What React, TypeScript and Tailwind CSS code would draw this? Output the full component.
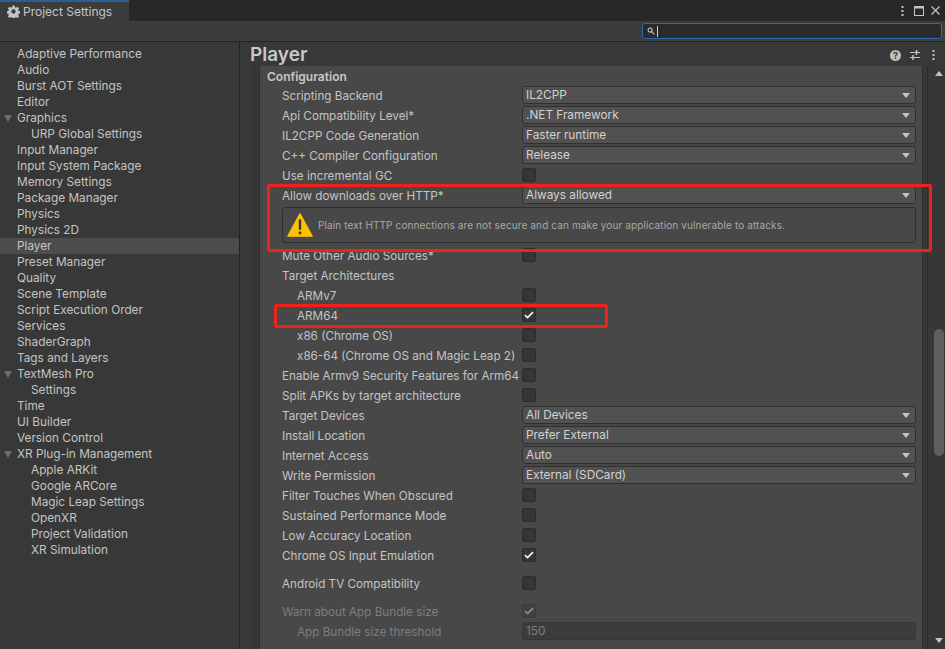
import React from 'react';

const menuItems: { label: string; indent?: boolean; arrow?: boolean; selected?: boolean }[] = [
  { label: 'Adaptive Performance' },
  { label: 'Audio' },
  { label: 'Burst AOT Settings' },
  { label: 'Editor' },
  { label: 'Graphics', arrow: true },
  { label: 'URP Global Settings', indent: true },
  { label: 'Input Manager' },
  { label: 'Input System Package' },
  { label: 'Memory Settings' },
  { label: 'Package Manager' },
  { label: 'Physics' },
  { label: 'Physics 2D' },
  { label: 'Player', selected: true },
  { label: 'Preset Manager' },
  { label: 'Quality' },
  { label: 'Scene Template' },
  { label: 'Script Execution Order' },
  { label: 'Services' },
  { label: 'ShaderGraph' },
  { label: 'Tags and Layers' },
  { label: 'TextMesh Pro', arrow: true },
  { label: 'Settings', indent: true },
  { label: 'Time' },
  { label: 'UI Builder' },
  { label: 'Version Control' },
  { label: 'XR Plug-in Management', arrow: true },
  { label: 'Apple ARKit', indent: true },
  { label: 'Google ARCore', indent: true },
  { label: 'Magic Leap Settings', indent: true },
  { label: 'OpenXR', indent: true },
  { label: 'Project Validation', indent: true },
  { label: 'XR Simulation', indent: true },
];

const Check = ({ dim }: { dim?: boolean }) => (
  <svg width="10" height="8" viewBox="0 0 10 8" fill="none">
    <path
      d="M1 4.2 L3.6 6.6 L9 1.2"
      stroke={dim ? '#8a8a8a' : '#eeeeee'}
      strokeWidth="1.8"
    />
  </svg>
);

const Checkbox = ({ checked, dim }: { checked?: boolean; dim?: boolean }) => (
  <div
    className={
      dim
        ? 'flex h-[14px] w-[14px] items-center justify-center rounded-[2px] border border-[#3a3a3a] bg-[#414141]'
        : 'flex h-[14px] w-[14px] items-center justify-center rounded-[2px] border border-[#2b2b2b] bg-[#353535]'
    }
  >
    {checked && <Check dim={dim} />}
  </div>
);

const Dropdown = ({ value }: { value: string }) => (
  <div className="flex h-[18px] flex-1 items-center justify-between rounded-[3px] border border-[#303030] bg-[#515151] pl-[3px] pr-[5px] text-[#d2d2d2]">
    <span>{value}</span>
    <div className="h-0 w-0 border-x-[4px] border-t-[5px] border-x-transparent border-t-[#c4c4c4]" />
  </div>
);

const Row = ({
  label,
  indent,
  dim,
  children,
}: {
  label: string;
  indent?: boolean;
  dim?: boolean;
  children: React.ReactNode;
}) => (
  <div className="flex h-5 items-center">
    <div
      className={
        (indent ? 'pl-[37px] ' : 'pl-[22px] ') +
        (dim
          ? 'w-[262px] shrink-0 whitespace-nowrap text-[11.7px] text-[#7e7e7e]'
          : 'w-[262px] shrink-0 whitespace-nowrap text-[11.7px] text-[#c4c4c4]')
      }
    >
      {label}
    </div>
    <div className="mb-[2px] flex flex-1 items-center pr-[6px] text-[11.8px]">{children}</div>
  </div>
);

export default function App() {
  return (
    <div
      className="relative flex h-[649px] w-[945px] flex-col overflow-hidden bg-[#383838] text-[12px] leading-4 text-[#c4c4c4]"
      style={{ fontFamily: 'Inter, "Liberation Sans", sans-serif' }}
    >
      {/* tab strip */}
      <div className="flex h-[21px] shrink-0 items-stretch justify-between bg-[#282828]">
        <div className="flex w-[129px] items-center gap-[3px] border-t-2 border-[#2a5f96] bg-[#3c3c3c] pl-[7px]">
          <svg width="13" height="13" viewBox="0 0 24 24" fill="#c4c4c4">
            <path d="M10 1h4l.6 3 2.3 1 2.6-1.7 2.8 2.8-1.7 2.6 1 2.3 3 .6v4l-3 .6-1 2.3 1.7 2.6-2.8 2.8-2.6-1.7-2.3 1-.6 3h-4l-.6-3-2.3-1-2.6 1.7-2.8-2.8 1.7-2.6-1-2.3-3-.6v-4l3-.6 1-2.3L1.700 6.100l2.800-2.800 2.600 1.700 2.300-1zM12 8a4 4 0 1 0 0 8 4 4 0 0 0 0-8z" />
          </svg>
          <span>Project Settings</span>
        </div>
        <div className="flex items-center pr-[5px]">
          <svg width="3" height="10" viewBox="0 0 3 10" fill="#c4c4c4">
            <rect x="0.500" y="0" width="2" height="2" />
            <rect x="0.500" y="4" width="2" height="2" />
            <rect x="0.500" y="8" width="2" height="2" />
          </svg>
          <svg width="10" height="10" viewBox="0 0 10 10" fill="none" stroke="#c4c4c4" className="ml-[10px]">
            <rect x="0.500" y="0.500" width="9" height="9" />
            <path d="M0.500 1.500H9.500" strokeWidth="2" />
          </svg>
          <svg width="9" height="9" viewBox="0 0 9 9" fill="none" stroke="#c4c4c4" strokeWidth="1.200" className="ml-[7px]">
            <path d="M0.500 0.500L8.500 8.500M8.500 0.500L0.500 8.500" />
          </svg>
        </div>
      </div>

      {/* search toolbar */}
      <div className="flex h-[21px] shrink-0 items-center justify-end border-b border-[#232323] bg-[#3c3c3c] pr-[3px]">
        <div className="flex h-4 w-[300px] items-center rounded-[3px] border border-[#2a6bb3] bg-[#2a2a2a] pl-[4px]">
          <svg width="8" height="8" viewBox="0 0 9 9" fill="none" stroke="#c4c4c4" strokeWidth="1.200">
            <circle cx="3.500" cy="3.500" r="2.300" />
            <path d="M5.300 5.300L8.300 8.300" />
          </svg>
          <div className="ml-[2px] h-[11px] w-px bg-[#d0d0d0]" />
        </div>
      </div>

      <div className="flex min-h-0 flex-1">
        {/* settings list */}
        <div className="w-[240px] shrink-0 border-r border-[#232323] bg-[#383838] pt-[4px] text-[11.8px]">
          {menuItems.map((item) => (
            <div
              key={item.label}
              className={
                item.selected
                  ? 'relative h-4 bg-[#4d4d4d] pl-[17px]'
                  : item.indent
                    ? 'relative h-4 pl-[31px]'
                    : 'relative h-4 pl-[17px]'
              }
            >
              {item.arrow && (
                <div className="absolute left-[4px] top-[5px] h-0 w-0 border-x-[4px] border-t-[7px] border-x-transparent border-t-[#6e6e6e]" />
              )}
              {item.label}
            </div>
          ))}
        </div>

        {/* player inspector */}
        <div className="flex min-w-0 flex-1 flex-col">
          <div className="flex h-[24px] shrink-0 items-center justify-between pl-[10px] pr-[10px] pt-[2px]">
            <span className="text-[19px] font-semibold leading-[22px] text-[#c8c8c8]">Player</span>
            <div className="flex items-center">
              <div className="flex h-[11px] w-[11px] items-center justify-center rounded-full bg-[#c0c0c0] text-[9px] font-bold leading-none text-[#383838]">
                ?
              </div>
              <svg width="10" height="10" viewBox="0 0 10 10" stroke="#c4c4c4" fill="none" className="ml-[9px]">
                <path d="M0 2.500H10M0 7.500H10" />
                <path d="M6.500 0V5M3 5V10" strokeWidth="1.500" />
              </svg>
              <svg width="3" height="10" viewBox="0 0 3 10" fill="#c4c4c4" className="ml-[12px]">
                <rect x="0.500" y="0" width="2" height="2" />
                <rect x="0.500" y="4" width="2" height="2" />
                <rect x="0.500" y="8" width="2" height="2" />
              </svg>
            </div>
          </div>

          <div className="flex min-h-0 flex-1">
            <div className="ml-[14px] w-[5px] shrink-0 border-l border-[#2e2e2e]" />
            <div className="min-w-0 w-[663px] shrink-0 overflow-hidden border-l border-[#2e2e2e] bg-[#484848] pt-[3px]">
              <div className="flex h-[16px] items-center pl-[7px] font-semibold text-[#c8c8c8]">Configuration</div>
              <div className="pt-[1px]">
                <Row label="Scripting Backend"><Dropdown value="IL2CPP" /></Row>
                <Row label="Api Compatibility Level*"><Dropdown value=".NET Framework" /></Row>
                <Row label="IL2CPP Code Generation"><Dropdown value="Faster runtime" /></Row>
                <Row label="C++ Compiler Configuration"><Dropdown value="Release" /></Row>
                <Row label="Use incremental GC"><Checkbox /></Row>
                <Row label="Allow downloads over HTTP*"><Dropdown value="Always allowed" /></Row>
                <div className="ml-[22px] mr-[6px] mt-[1px] flex h-[36px] items-center rounded-[3px] border border-[#2e2e2e] bg-[#484848] pl-[4px]">
                  <svg width="26" height="26" viewBox="0 0 28 28">
                    <path d="M14 2 L27 26 H1 Z" fill="#fdc103" stroke="#fdc103" strokeWidth="1.500" strokeLinejoin="round" />
                    <path d="M14 9V18" stroke="#3a3a3a" strokeWidth="2.600" strokeLinecap="round" />
                    <circle cx="14" cy="22.500" r="1.600" fill="#3a3a3a" />
                  </svg>
                  <span className="ml-[5px] text-[10px] tracking-[0.12px] text-[#a8a8a8]">
                    Plain text HTTP connections are not secure and can make your application vulnerable to attacks.
                  </span>
                </div>
                <div className="mt-[3px]">
                  <Row label="Mute Other Audio Sources*"><Checkbox /></Row>
                </div>
                <Row label="Target Architectures"><span /></Row>
                <Row label="ARMv7" indent><Checkbox /></Row>
                <Row label="ARM64" indent><Checkbox checked /></Row>
                <Row label="x86 (Chrome OS)" indent><Checkbox /></Row>
                <Row label="x86-64 (Chrome OS and Magic Leap 2)" indent><Checkbox /></Row>
                <Row label="Enable Armv9 Security Features for Arm64"><Checkbox /></Row>
                <Row label="Split APKs by target architecture"><Checkbox /></Row>
                <Row label="Target Devices"><Dropdown value="All Devices" /></Row>
                <Row label="Install Location"><Dropdown value="Prefer External" /></Row>
                <Row label="Internet Access"><Dropdown value="Auto" /></Row>
                <Row label="Write Permission"><Dropdown value="External (SDCard)" /></Row>
                <Row label="Filter Touches When Obscured"><Checkbox /></Row>
                <Row label="Sustained Performance Mode"><Checkbox /></Row>
                <Row label="Low Accuracy Location"><Checkbox /></Row>
                <Row label="Chrome OS Input Emulation"><Checkbox checked /></Row>
                <div className="mt-2">
                  <Row label="Android TV Compatibility"><Checkbox /></Row>
                </div>
                <div className="mt-2">
                  <Row label="Warn about App Bundle size" dim><Checkbox checked dim /></Row>
                </div>
                <Row label="App Bundle size threshold" indent dim>
                  <div className="flex h-[18px] flex-1 items-center rounded-[3px] border border-[#363636] bg-[#3c3c3c] pl-[3px] text-[#7e7e7e]">
                    150
                  </div>
                </Row>
              </div>
            </div>
            <div className="w-[5px] shrink-0 border-l border-[#2e2e2e]" />
            <div className="w-[5px] shrink-0 border-l border-[#2e2e2e]" />
            {/* scrollbar */}
            <div className="relative w-[13px] shrink-0 bg-[#373737]">
              <div className="absolute left-[3px] top-[5px] h-0 w-0 border-x-[4px] border-b-[5px] border-x-transparent border-b-[#c4c4c4]" />
              <div className="absolute left-[2px] top-[263px] h-[127px] w-[10px] rounded-[5px] bg-[#5f5f5f]" />
              <div className="absolute bottom-[6px] left-[3px] h-0 w-0 border-x-[4px] border-t-[5px] border-x-transparent border-t-[#c4c4c4]" />
            </div>
          </div>
        </div>
      </div>

      {/* red annotation boxes drawn over the screenshot */}
      <div className="absolute left-[267px] top-[184px] h-[68px] w-[665px] rounded-[2px] border-[3px] border-[#f0201a]" />
      <div className="absolute left-[274px] top-[304px] h-[24px] w-[334px] rounded-[3px] border-[3px] border-[#f0201a]" />
    </div>
  );
}
